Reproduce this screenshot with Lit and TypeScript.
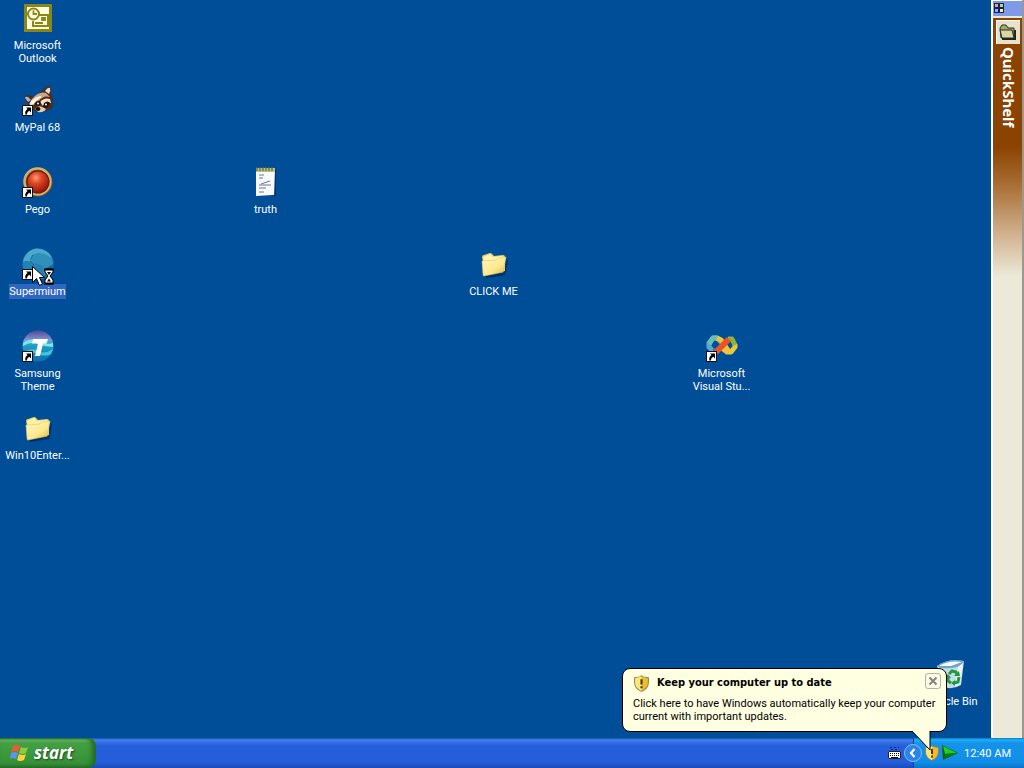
import { LitElement, html, css, svg } from "lit";
import { customElement, property } from "lit/decorators.js";
import { classMap } from "lit/directives/class-map.js";
import { styleMap } from "lit/directives/style-map.js";

const shortcutArrow = svg`
  <rect x="0.5" y="21.5" width="10" height="10" fill="#fff" stroke="#111"/>
  <path d="M4 23.500h5v5l-1.700-1.700c-1.500 .8-2.300 1.900-2.300 3.700h-1.600c-.6-2.500 .3-4.200 2.200-5.400z" fill="#000"/>`;

const folder = html`<svg viewBox="0 0 32 32">
  <defs><linearGradient id="f" x1="0" y1="0" x2="1" y2="1">
    <stop offset="0" stop-color="#fff8c4"/><stop offset=".6" stop-color="#fce88c"/><stop offset="1" stop-color="#d9ad3c"/>
  </linearGradient></defs>
  <path d="M7 28l19-3 3-14 1 2-3 14-19 3z" fill="#0a2444" opacity=".75"/>
  <path d="M4 9q0-2 2-2l6-2q2 0 3 2l1 1 9-1q2 0 2 2v14l-19 4z" fill="#e9cf68"/>
  <path d="M5 9l7-3 3 3 10-1 1 2-20 4z" fill="#fff3ac"/>
  <path d="M4 13l14-1 2-2 8-1-3 15-19 4q-1 0-1-2z" fill="url(#f)" stroke="#e5c869" stroke-width=".6"/>
</svg>`;

const icons: Record<string, unknown> = {
  outlook: html`<svg viewBox="0 0 32 32">
    <rect x="2" y="2" width="28" height="28" fill="#8a8718"/>
    <rect x="5" y="5" width="22" height="22" fill="#fffde0"/>
    <path d="M14 13h12v11H11v-5" fill="#fffde0" stroke="#8a8718" stroke-width="2"/>
    <circle cx="11.500" cy="12" r="5.500" fill="#fffde0" stroke="#8a8718" stroke-width="2"/>
    <path d="M11.500 8.500V12h3.500M20 16h3v2h-3zM13 21h8" fill="none" stroke="#8a8718" stroke-width="1.800"/>
  </svg>`,
  mypal: html`<svg viewBox="0 0 32 32">
    <path d="M3 16q-2-5 3-5 3 0 6 2l9-7q3-4 6-4 3 1 2 7l2 7q1 10-7 11l-9 1q-6-3-9-8z" fill="#4b2d20"/>
    <path d="M23 7q3-4 5-3 1 3-1 6z" fill="#e8dccb"/>
    <path d="M3 14q0-2 3-1l3 3-3 2z" fill="#9fb6cf"/>
    <path d="M10 15q7-8 14-6l4 4q-7-2-11 4l-7 5-3-2z" fill="#c9a98a"/>
    <path d="M9 17q4-4 9-5l2 1q-6 3-8 7l-4 1z" fill="#fff3e2"/>
    <path d="M18 18q4-5 10-3l1 4q-5-1-8 3z" fill="#f3dfc7"/>
    <path d="M12 20q3-4 6-3 2 3-1 5zM22 19q4-3 6 0l-3 5-4-1z" fill="#21120e"/>
    <path d="M13 25q3-4 7-2l4 2q-3 4-8 3z" fill="#e6cfb4"/>
    <ellipse cx="16" cy="25" rx="2.500" ry="2" fill="#111"/>
    <circle cx="16" cy="19.500" r="1" fill="#fff"/><circle cx="24" cy="20.500" r="1" fill="#fff"/>
    ${shortcutArrow}
  </svg>`,
  pego: html`<svg viewBox="0 0 32 32">
    <defs><radialGradient id="p" cx=".4" cy=".3" r=".75">
      <stop offset="0" stop-color="#ff9a70"/><stop offset=".35" stop-color="#e04a28"/><stop offset="1" stop-color="#8f1006"/>
    </radialGradient></defs>
    <circle cx="16" cy="16" r="14.500" fill="#7d4a25"/>
    <circle cx="15.500" cy="15.500" r="13" fill="none" stroke="#d3b06c" stroke-width="2.500"/>
    <circle cx="16" cy="16" r="11.500" fill="#6b1c0e"/>
    <circle cx="16" cy="16" r="10.500" fill="url(#p)"/>
    ${shortcutArrow}
  </svg>`,
  supermium: html`<svg viewBox="0 0 32 32">
    <circle cx="16" cy="16" r="15.500" fill="#2383b4"/>
    <path d="M1 14Q3 3 14 .5q12 0 16 10-9-7-18-4-4 3-1 8-5-3-10-.5z" fill="#4aa9cd"/>
    <path d="M10 7q9-5 20 4 3 8-3 15-2 4-8 5 6-6 2-12-4-5-10-3-2-4-1-9z" fill="#2f90bc"/>
    <path d="M11 7q-5 6 1 10" fill="none" stroke="#16699a"/>
    <path d="M31 16q0 12-11 15 5-5 3-10z" fill="#14669c"/>
    ${shortcutArrow}
  </svg>`,
  samsung: html`<svg viewBox="0 0 32 32">
    <defs><linearGradient id="s" x1="0" y1="0" x2="0" y2="1">
      <stop offset="0" stop-color="#51479a"/><stop offset=".33" stop-color="#8698d4"/><stop offset=".4" stop-color="#22a8c8"/><stop offset="1" stop-color="#0a6fb0"/>
    </linearGradient></defs>
    <circle cx="16" cy="16" r="15.500" fill="url(#s)"/>
    <path d="M1 13q7-6 15-2t15 2v4q-8 0-15-3t-15 2z" fill="#7fe4ec"/>
    <path d="M2 22q8-5 14-1t15-2l-2 5q-6 3-12 0t-13 1z" fill="#43c6dc"/>
    <path d="M11 9h15l-1.500 4.500H21L18 26h-5l3-12.500h-6z" fill="#fff"/>
    ${shortcutArrow}
  </svg>`,
  folder,
  notepad: html`<svg viewBox="0 0 32 32">
    <path d="M7 29h18V3l1 1v26H7z" fill="#07305e"/>
    <path d="M6 3h19l-1 26-18 1z" fill="#f7f9fb"/>
    <path d="M6 2h19v4H6z" fill="#b9c087"/>
    <path d="M7 1v4M10 1v4M13 1v4M16 1v4M19 1v4M22 1v4" stroke="#5f6840" stroke-width="1.200"/>
    <path d="M9 9h5M9 12h4M11 18l9-3M9 19h12M9 22h7M9 26h5" stroke="#6d7790" stroke-width="1"/>
  </svg>`,
  vstudio: html`<svg viewBox="0 0 32 32">
    <g fill="none" stroke-width="5" stroke-linejoin="round">
      <path d="M16 13l-5-5H7l-4 5v4l4 4" stroke="#5aa6d8"/>
      <path d="M3 14l4-6h5" stroke="#67bfb0"/>
      <path d="M7 21h4l5-5" stroke="#3b76c0"/>
      <path d="M16 18l5 4h4l4-5v-3" stroke="#e8c93c"/>
      <path d="M29 15l-3-6h-4" stroke="#8bb43c"/>
      <path d="M11 8l4 2 4 6 4 6" stroke="#f2c238"/>
      <path d="M10 22l13-13" stroke="#e8532c" stroke-width="6"/>
    </g>
    ${shortcutArrow}
  </svg>`,
  recycle: html`<svg viewBox="0 0 32 32">
    <path d="M3 8Q14 0 30 3l-3 24q-8 5-18 2z" fill="#c6dcec"/>
    <path d="M3 8Q14 0 30 3q-2 6-13 7Q6 11 3 8z" fill="#6da4cb"/>
    <path d="M5 8Q14 2 28 4L17 8z" fill="#f4f9fc"/>
    <path d="M24 9l5-4-3 21-5 3z" fill="#eef5fa"/>
    <g fill="none" stroke="#1f9a3c" stroke-width="3"><path d="M15 16l3-3 4 1 1 3M25 19l-1 5-4 1M17 25l-3-2v-4"/></g>
    <path d="M20 18h6l-1-5zM21 22v6l-4-3zM10 20l4-4 3 4z" fill="#1f9a3c"/>
  </svg>`,
};

const shield = html`<svg viewBox="0 0 16 16">
  <path d="M8 0l1.500 1.500L15 2v5q0 6-7 9-7-3-7-9V2l5.500-.5z" fill="#8a8468"/>
  <path d="M8 1.500L14 3v4q0 5-6 8-6-3-6-8V3z" fill="#f0bb2c"/>
  <path d="M8 1.500V15q-6-3-6-8V3z" fill="#fbe678"/>
  <path d="M7 4h2v5H7zM7 10.500h2v2H7z" fill="#4a3a08"/>
</svg>`;

@customElement("desktop-icon")
class DesktopIcon extends LitElement {
  @property() label = "";
  @property() icon = "";
  @property({ type: Boolean }) selected = false;

  static styles = css`
    :host { display: block; }
    .item {
      display: flex; flex-direction: column; align-items: center; gap: 4px;
      width: 100%; padding: 2px 1px 0 0; border: 0; background: none;
      color: #fff; font: 11px/13px Roboto, sans-serif;
    }
    .glyph { width: 32px; height: 32px; }
    .glyph svg { display: block; width: 100%; height: 100%; }
    .caption { max-width: 70px; padding: 1px 0; }
    .selected .caption { background: #2f66c0; }
  `;

  render() {
    return html`<button class=${classMap({ item: true, selected: this.selected })}>
      <span class="glyph">${icons[this.icon]}</span>
      <span class="caption">${this.label}</span>
    </button>`;
  }
}

@customElement("quick-shelf")
class QuickShelf extends LitElement {
  static styles = css`
    :host { display: flex; flex-direction: column; border-left: 2px solid #fff; background: #ece9d8; border-right: 2px solid #9a9890; }
    .caption { height: 18px; padding-top: 1px; background: #7f9ae6; border-top: 1px solid #fff; border-bottom: 2px solid #ece9d8; box-sizing: border-box; }
    .caption svg { display: block; width: 12px; height: 12px; }
    .body {
      flex: 1; display: flex; flex-direction: column; align-items: center; padding-top: 2px; gap: 3px;
      background: linear-gradient(#8a4300 0, #8a4300 128px, #a5692e 163px, #cfad88 213px, #ece9d8 258px);
    }
    .open { width: 24px; height: 24px; padding: 2px; border: 0; background: #e8e2cc; box-shadow: inset 1px 1px #fff; }
    .open svg { display: block; width: 20px; height: 20px; }
    .title { writing-mode: vertical-rl; color: #fff; font: bold 15px/20px "Noto Sans", sans-serif; padding-left: 2px; }
  `;

  render() {
    return html`
      <div class="caption"><svg viewBox="0 0 12 12">
        <path d="M1 1h10v10H1z" fill="#102060"/>
        <path d="M2 2h3v3H2z" fill="#f0a080"/><path d="M7 2h3v3H7z" fill="#a0e080"/>
        <path d="M2 7h3v3H2z" fill="#90b0ff"/><path d="M7 7h3v3H7z" fill="#fff080"/>
      </svg></div>
      <div class="body">
        <button class="open" aria-label="Open shelf"><svg viewBox="0 0 20 20">
          <path d="M4 18h14V8h-2v8H4z" fill="#222"/>
          <path d="M2 6l2-3h4l2 3h6v10H3z" fill="#a5a970" stroke="#2d2d1c"/>
          <path d="M2 8h12l2 8H4z" fill="#d6d9a2" stroke="#2d2d1c"/>
        </svg></button>
        <span class="title">QuickShelf</span>
      </div>`;
  }
}

@customElement("update-balloon")
class UpdateBalloon extends LitElement {
  static styles = css`
    :host { display: block; box-sizing: border-box; width: 325px; padding: 4px 5px 8px 10px; border: 1px solid #000; border-radius: 8px; background: #ffffe1; color: #000; font: 11px/13px Roboto, sans-serif; }
    .head { display: flex; align-items: flex-start; gap: 7px; }
    .shield { width: 17px; height: 17px; padding-top: 2px; }
    .shield svg { display: block; width: 100%; height: 100%; }
    .title { flex: 1; margin: 0; font: bold 11px/20px "DejaVu Sans Condensed", sans-serif; }
    .close { width: 16px; height: 16px; padding: 0; border: 1px solid #b4b2a0; border-radius: 3px; background: #fbfae6; }
    .close svg { display: block; width: 14px; height: 14px; }
    .text { margin: 4px 0 0; }
    .tail { position: absolute; right: 14px; top: 100%; width: 20px; height: 20px; }
  `;

  render() {
    return html`
      <div class="head">
        <span class="shield">${shield}</span>
        <h2 class="title">Keep your computer up to date</h2>
        <button class="close" aria-label="Close"><svg viewBox="0 0 14 14"><path d="M3.500 3.500l7 7M10.500 3.500l-7 7" stroke="#85847a" stroke-width="2"/></svg></button>
      </div>
      <p class="text">Click here to have Windows automatically keep your computer<br>current with important updates.</p>
      <svg class="tail" viewBox="0 0 20 20"><path d="M0 0L18 19V0" fill="#ffffe1"/><path d="M0 0L18 19V0" fill="none" stroke="#000"/></svg>`;
  }
}

@customElement("task-bar")
class TaskBar extends LitElement {
  static styles = css`
    :host {
      display: flex; height: 30px; font: 11px/13px Roboto, sans-serif; color: #fff;
      background: linear-gradient(#1f4bb0 0, #3f85f0 2px, #3470e6 4px, #245edb 8px, #245edb 24px, #1d4bb8 30px);
    }
    .start {
      display: flex; align-items: center; gap: 4px; width: 96px; padding: 0 0 0 10px; border: 0;
      border-radius: 0 8px 8px 0; color: #fff;
      background: linear-gradient(#2a6f2a 0, #6fbb6d 2px, #44a044 5px, #3a953a 20px, #378f37 26px, #25702a 30px);
      box-shadow: inset -4px 0 5px #226a26;
      font: italic bold 17px/24px "Open Sans", sans-serif; text-shadow: 1px 1px 2px #1c4a1c;
    }
    .start svg { width: 20px; height: 20px; }
    .tasks { flex: 1; }
    .button { display: block; width: 16px; height: 16px; padding: 0; border: 0; background: none; }
    .button svg { display: block; width: 100%; height: 100%; }
    .input { align-self: center; margin-right: 11px; }
    .tray {
      display: flex; align-items: center; gap: 2px; padding-right: 13px;
      background: linear-gradient(#1278c8 0, #1ab2f4 2px, #1593ea 5px, #118fe8 24px, #0d74c8 30px);
      border-left: 1px solid #1042af;
    }
    .expand { width: 18px; height: 18px; margin-left: -10px; }
    .clock { margin-left: 4px; }
  `;

  render() {
    return html`
      <button class="start"><svg viewBox="0 0 20 20">
        <path d="M3 3q3-2 7 0L8 9Q5 7 1 9z" fill="#ef5a2b"/>
        <path d="M11 4q4 2 7 0l-2 6q-3 2-7 0z" fill="#8ccb3f"/>
        <path d="M1 10q3-2 7 0l-2 6q-3-2-6 0z" fill="#5a95f2"/>
        <path d="M9 11q4 2 7 0l-2 6q-4 2-7 0z" fill="#fcd13c"/>
      </svg>start</button>
      <div class="tasks"></div>
      <button class="button input" aria-label="Keyboard"><svg viewBox="0 0 16 16">
        <path d="M4 2.500h2M8 2.500h2M12 2.500h1M5 4.500h2M9 4.500h2" stroke="#102a70"/>
        <path d="M2 6h13v8H2z" fill="#fff"/>
        <path d="M2.500 6.500h12v7h-12z" fill="none" stroke="#222"/>
        <path d="M4 8.500h10M4 10.500h10" stroke="#111" stroke-dasharray="1 1"/>
        <path d="M5 12.500h7" stroke="#111"/>
      </svg></button>
      <div class="tray">
        <button class="button expand" aria-label="Show hidden icons"><svg viewBox="0 0 18 18">
          <circle cx="9" cy="9" r="8.500" fill="#2c84e8" stroke="#7fc0f6"/><path d="M10.500 5L7 9l3.500 4" fill="none" stroke="#fff" stroke-width="2.200"/>
        </svg></button>
        <button class="button" aria-label="Updates">${shield}</button>
        <button class="button" aria-label="Player"><svg viewBox="0 0 16 16"><path d="M0 0l16 8-15 7z" fill="#0b5a10"/><path d="M1 1l14 7-12 1z" fill="#1fd01f"/><path d="M3 9l12-1-13 6z" fill="#0a7a14"/></svg></button>
        <time class="clock">12:40 AM</time>
      </div>`;
  }
}

interface Item { label: string; icon: string; col: number; row: number; selected?: boolean }

const items: Item[] = [
  { label: "Microsoft Outlook", icon: "outlook", col: 1, row: 1 },
  { label: "MyPal 68", icon: "mypal", col: 1, row: 2 },
  { label: "Pego", icon: "pego", col: 1, row: 3 },
  { label: "Supermium", icon: "supermium", col: 1, row: 4, selected: true },
  { label: "Samsung Theme", icon: "samsung", col: 1, row: 5 },
  { label: "Win10Enter...", icon: "folder", col: 1, row: 6 },
  { label: "truth", icon: "notepad", col: 4, row: 3 },
  { label: "CLICK ME", icon: "folder", col: 7, row: 4 },
  { label: "Microsoft Visual Stu...", icon: "vstudio", col: 10, row: 5 },
  { label: "Recycle Bin", icon: "recycle", col: 13, row: 9 },
];

@customElement("app-root")
class AppRoot extends LitElement {
  static styles = css`
    :host { display: flex; flex-direction: column; height: 100vh; position: relative; overflow: hidden; background: #004e98; }
    .screen { flex: 1; display: flex; min-height: 0; }
    .desktop { flex: 1; display: grid; grid-template-columns: repeat(auto-fill, 76px); grid-auto-rows: 82px; align-content: start; }
    .shelf { width: 29px; }
    .balloon { position: absolute; right: 77px; bottom: 36px; }
    .pointer { position: absolute; left: 32px; top: 266px; width: 24px; height: 24px; pointer-events: none; }
  `;

  render() {
    return html`
      <main class="screen">
        <div class="desktop">
          ${items.map(i => html`<desktop-icon
            style=${styleMap({ gridColumn: String(i.col), gridRow: String(i.row) })}
            .label=${i.label} .icon=${i.icon} .selected=${!!i.selected}></desktop-icon>`)}
        </div>
        <quick-shelf class="shelf"></quick-shelf>
      </main>
      <task-bar></task-bar>
      <update-balloon class="balloon"></update-balloon>
      <svg class="pointer" viewBox="0 0 24 24">
        <path d="M.5 .5v16l4-4 3 7 3-1.500-3-6.500h5z" fill="#fff" stroke="#000"/>
        <path d="M13 3h8v3l-3 4 3 4v4h-8v-4l3-4-3-4z" fill="#fff" stroke="#000"/>
        <path d="M12 3.500h10M12 17.500h10" stroke="#000" stroke-width="2"/>
        <path d="M15 6h4l-2 3zM15 15.500l2-3 2 3z" fill="#000"/>
      </svg>`;
  }
}
